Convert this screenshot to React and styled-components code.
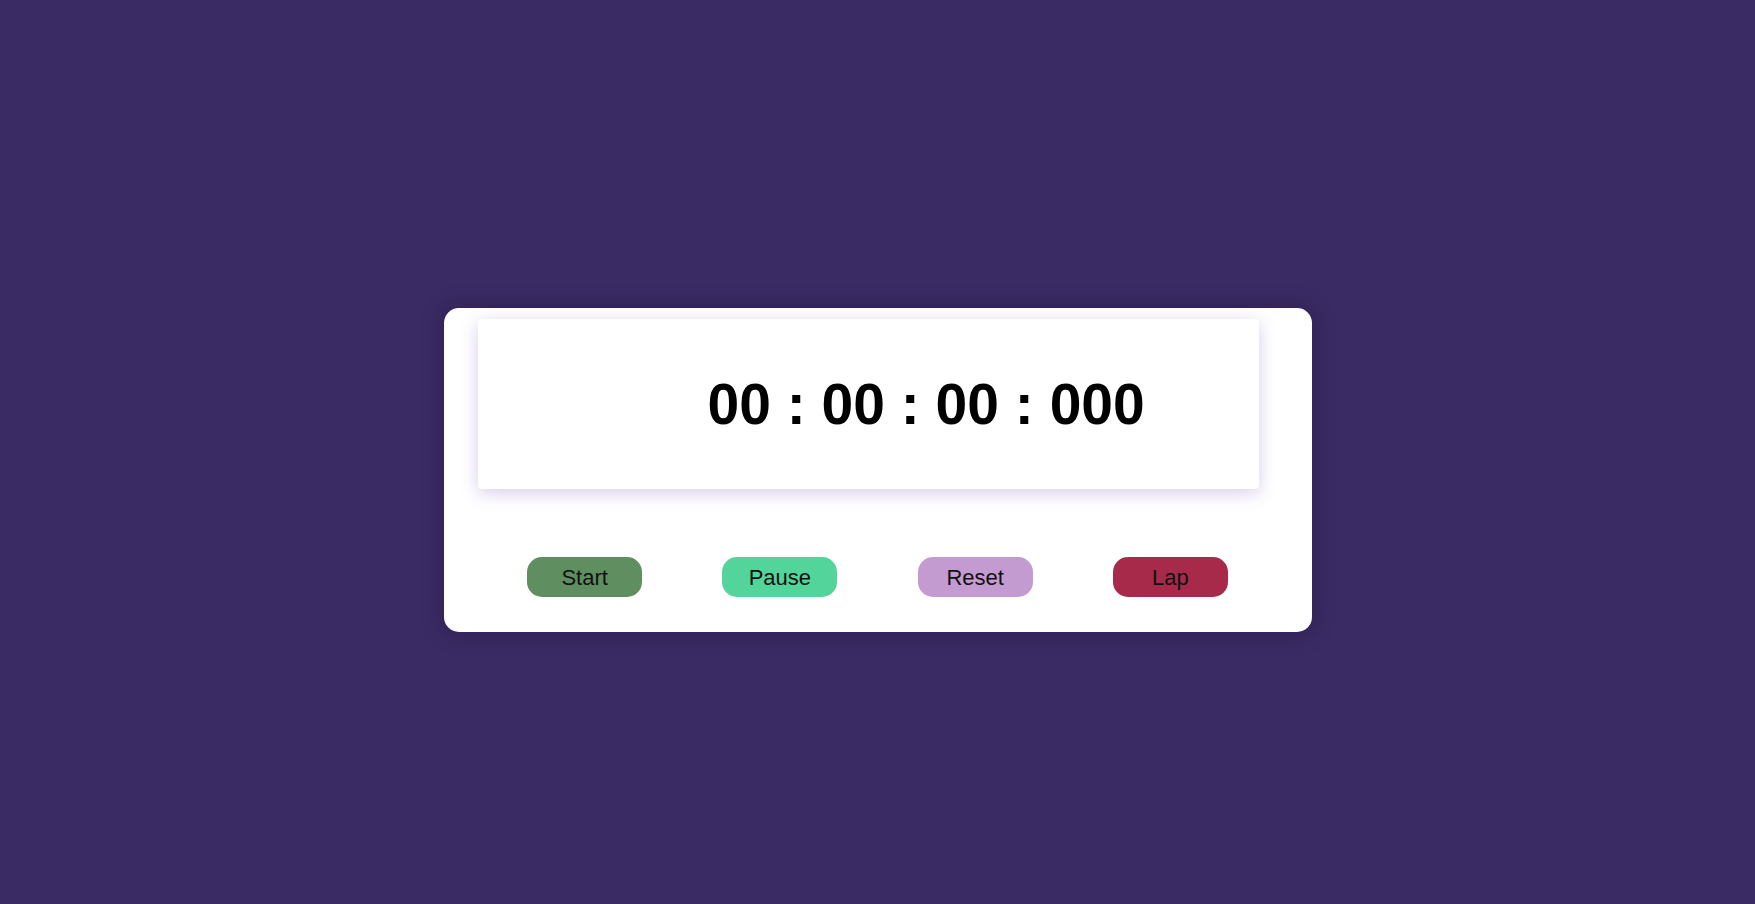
import React from 'react';
import styled, { createGlobalStyle } from 'styled-components';

const GlobalStyle = createGlobalStyle`
  * {
    box-sizing: border-box;
  }

  body {
    margin: 0;
    background-color: #3a2b64;
    font-family: 'Liberation Sans', Arial, sans-serif;
  }
`;

const Page = styled.div`
  min-height: 100vh;
  display: flex;
  justify-content: center;
  align-items: center;
  padding-top: 36px;
`;

const Card = styled.div`
  width: 868px;
  height: 324px;
  display: flex;
  flex-direction: column;
  align-items: center;
  padding: 11px 0 35px;
  background-color: #ffffff;
  border-radius: 15px;
  box-shadow: 0 0 22px rgba(20, 10, 40, 0.35);
`;

const Display = styled.div`
  width: 781px;
  height: 170px;
  align-self: flex-start;
  margin-left: 34px;
  display: flex;
  align-items: center;
  padding-left: 230px;
  background-color: #ffffff;
  border-radius: 4px;
  box-shadow: 0 4px 18px rgba(110, 80, 180, 0.28);
`;

const Time = styled.h1`
  margin: 0;
  font-size: 57px;
  font-weight: 700;
  color: #000000;
  white-space: pre;
`;

const ButtonRow = styled.div`
  width: 781px;
  margin-top: 68px;
  display: flex;
  justify-content: space-around;
`;

const Button = styled.button`
  width: 115px;
  height: 40px;
  padding: 2px 0 0;
  border: none;
  border-radius: 15px;
  background-color: ${(props) => props.$color};
  color: #111111;
  font-family: 'Liberation Sans', Arial, sans-serif;
  font-size: 22px;
  cursor: pointer;
`;

const buttons = [
  { label: 'Start', color: '#5f8e60' },
  { label: 'Pause', color: '#52d49b' },
  { label: 'Reset', color: '#c39bd0' },
  { label: 'Lap', color: '#a82a4a' },
];

const App = () => {
  return (
    <>
      <GlobalStyle />
      <Page>
        <Card>
          <Display>
            <Time>00 : 00 : 00 : 000</Time>
          </Display>
          <ButtonRow>
            {buttons.map((item) => (
              <Button key={item.label} $color={item.color}>
                {item.label}
              </Button>
            ))}
          </ButtonRow>
        </Card>
      </Page>
    </>
  );
};

export default App;
